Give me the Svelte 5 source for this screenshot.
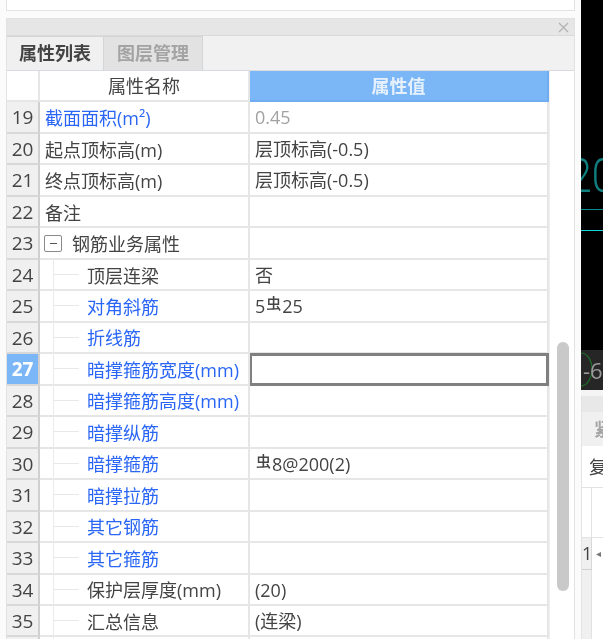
<script>
  // attribute panel rows; kind: blue = editable attr, tree = child of the rebar group
  const rows = [
    { n: 19, name: '截面面积(m²)', value: '0.45', blue: true, muted: true },
    { n: 20, name: '起点顶标高(m)', value: '层顶标高(-0.5)' },
    { n: 21, name: '终点顶标高(m)', value: '层顶标高(-0.5)' },
    { n: 22, name: '备注', value: '' },
    { n: 23, name: '钢筋业务属性', value: '', group: true },
    { n: 24, name: '顶层连梁', value: '否', tree: true },
    { n: 25, name: '对角斜筋', pre: '5', bar: true, value: '25', tree: true, blue: true },
    { n: 26, name: '折线筋', value: '', tree: true, blue: true },
    { n: 27, name: '暗撑箍筋宽度(mm)', value: '', tree: true, blue: true, active: true },
    { n: 28, name: '暗撑箍筋高度(mm)', value: '', tree: true, blue: true },
    { n: 29, name: '暗撑纵筋', value: '', tree: true, blue: true },
    { n: 30, name: '暗撑箍筋', bar: true, value: '8@200(2)', tree: true, blue: true },
    { n: 31, name: '暗撑拉筋', value: '', tree: true, blue: true },
    { n: 32, name: '其它钢筋', value: '', tree: true, blue: true },
    { n: 33, name: '其它箍筋', value: '', tree: true, blue: true },
    { n: 34, name: '保护层厚度(mm)', value: '(20)', tree: true },
    { n: 35, name: '汇总信息', value: '(连梁)', tree: true },
    { n: '', name: '', value: '', tree: true }
  ];
</script>

<div class="app">
  <div class="left">
    <div class="top-strip"></div>
    <section class="panel">
      <header class="title">
        <svg class="close" width="11" height="11" viewBox="0 0 11 11"><path d="M1 1l9 9M10 1l-9 9" stroke="#b4b4b4" stroke-width="1.4" fill="none" /></svg>
      </header>
      <div class="tabs">
        <div class="tab on">属性列表</div>
        <div class="tab">图层管理</div>
      </div>
      <div class="body">
        <div class="table">
          <div class="head corner"></div>
          <div class="head">属性名称</div>
          <div class="head value-head">属性值</div>
          {#each rows as r}
            <div class="num" class:active={r.active}>{r.n}</div>
            <div class="name" class:blue={r.blue}>
              {#if r.group}
                <span class="minus"><i></i></span>
                <span class="group-label">{r.name}</span>
              {:else if r.tree}
                <span class="branch"></span>
                <span class="tree-label">{r.name}</span>
              {:else}
                {r.name}
              {/if}
            </div>
            <div class="val" class:muted={r.muted} class:active={r.active}>
              {#if r.pre}{r.pre}{/if}{#if r.bar}<span class="bar">虫</span>{/if}{r.value}
            </div>
          {/each}
        </div>
        <div class="scroll"><div class="thumb"></div></div>
      </div>
    </section>
  </div>
  <div class="right">
    <div class="canvas">
      <span class="cad-num">20</span>
      <div class="cad-line dim"></div>
      <div class="cad-line bright"></div>
      <div class="cad-foot">
        <svg class="ring" width="22" height="40" viewBox="0 0 22 40"><path d="M0 3C6 3 11 10 11 19S6 36 0 36M11 19" stroke="#1f6b2a" stroke-width="1.2" fill="none" /></svg>
        <span>-6</span>
      </div>
    </div>
    <div class="lower">
      <div class="lower-title"></div>
      <div class="lower-tab">紧</div>
      <div class="lower-row">复</div>
      <div class="lower-grid">
        <div class="lg-corner"></div>
        <div class="lg-head"></div>
        <div class="lg-num">1</div>
        <div class="lg-cell">◂</div>
        <div class="lg-rest"></div>
        <div class="lg-fill"></div>
      </div>
    </div>
  </div>
</div>

<style>
  :global(body) {
    margin: 0;
    background: #f4f4f4;
  }
  .app {
    display: flex;
    width: 603px;
    height: 639px;
    overflow: hidden;
    font-family: "Open Sans", "Noto Sans CJK SC", sans-serif;
    font-size: 18px;
    color: #444;
    filter: blur(0.35px);
  }
  .left {
    width: 581px;
    flex: none;
    padding-left: 6px;
    box-sizing: border-box;
    background: #fbfbfb;
  }
  .top-strip {
    height: 10px;
    margin-right: 6px;
    background: #fff;
    border: 1px solid #e3e3e3;
    border-top: 0;
  }
  .panel {
    margin: 7px 6px 0 0;
    border: 1px solid #e2e2e2;
    border-bottom: 0;
    background: #f1f1f1;
  }
  .title {
    height: 16px;
    background: #e6e6e6;
    border-bottom: 1px solid #dadada;
    display: flex;
    justify-content: flex-end;
    align-items: center;
    padding-right: 5px;
  }
  .tabs {
    display: flex;
    height: 34px;
    border-bottom: 1px solid #d8dce0;
  }
  .tab {
    width: 99px;
    height: 34px;
    line-height: 33px;
    text-align: center;
    font-weight: 700;
    color: #a3a3a3;
    background: #e2e2e2;
    border: 1px solid #d3d6d9;
    border-bottom: 0;
    border-left: 0;
    box-sizing: border-box;
  }
  .tab.on {
    width: 97px;
    color: #444;
    background: #f0f0f0;
  }
  .body {
    display: flex;
    background: #fff;
  }
  .table {
    display: grid;
    grid-template-columns: 33px 210px 299px;
    grid-auto-rows: 31.47px;
    width: 542px;
    flex: none;
  }
  .head {
    background: #fff;
    text-align: center;
    line-height: 30px;
    border-bottom: 2px solid #e6e6e6;
    border-right: 2px solid #e6e6e6;
    box-sizing: border-box;
  }
  .value-head {
    background: #7bb6f6;
    color: #e6f1fd;
    font-weight: 700;
    border-color: #6fadf0;
  }
  .num {
    background: #f0f0f0;
    border-right: 2px solid #d0d0d0;
    border-bottom: 2px solid #d8d8d8;
    text-align: center;
    line-height: 31px;
    font-size: 19px;
    box-sizing: border-box;
  }
  .num.active {
    background: #7bb6f6;
    color: #fff;
    font-weight: 700;
  }
  .name {
    display: flex;
    align-items: center;
    padding-left: 5px;
    border-right: 2px solid #e6e6e6;
    border-bottom: 2px solid #e6e6e6;
    box-sizing: border-box;
    position: relative;
    white-space: nowrap;
  }
  .name.blue {
    color: #2a66f5;
  }
  .minus {
    width: 18px;
    height: 17px;
    margin-left: -1px;
    border: 1px solid #8a8a8a;
    border-radius: 2px;
    box-sizing: border-box;
    display: flex;
    align-items: center;
    justify-content: center;
    flex: none;
  }
  .minus i {
    width: 7px;
    height: 1px;
    background: #555;
  }
  .group-label {
    margin-left: 10px;
  }
  .branch {
    position: absolute;
    left: 13px;
    top: -1px;
    bottom: -2px;
    width: 25px;
    border-left: 1px solid #ebebeb;
  }
  .branch::after {
    content: "";
    position: absolute;
    left: 0;
    top: 15px;
    width: 25px;
    height: 1px;
    background: #e8e8e8;
  }
  .tree-label {
    margin-left: 42px;
  }
  .val {
    padding-left: 5px;
    line-height: 31px;
    border-right: 2px solid #e6e6e6;
    border-bottom: 2px solid #e6e6e6;
    box-sizing: border-box;
    white-space: nowrap;
  }
  .val.muted {
    color: #a2a2a2;
  }
  .val.active {
    border: 3px solid #808080;
    margin: -1px 0 0 -1px;
  }
  .bar {
    font-size: 15px;
    font-weight: 500;
    position: relative;
    top: -4px;
    margin: 0 1px;
  }
  .scroll {
    width: 25px;
    flex: 1;
    background: #fff;
    position: relative;
    border-left: 1px solid #f0f0f0;
  }
  .thumb {
    position: absolute;
    left: 7px;
    top: 271px;
    width: 12px;
    height: 249px;
    border-radius: 6px;
    background: #c9c9c9;
  }
  .close {
    display: block;
  }
  .right {
    flex: 1;
    min-width: 0;
    background: #f4f4f4;
    display: flex;
    flex-direction: column;
  }
  .canvas {
    height: 390px;
    background: #000;
    position: relative;
    overflow: hidden;
    flex: none;
  }
  .cad-num {
    position: absolute;
    left: -12px;
    top: 148px;
    font-family: Roboto, sans-serif;
    font-weight: 300;
    font-size: 48px;
    line-height: 56px;
    color: #0f7f80;
    transform: scaleX(0.85);
    transform-origin: left;
  }
  .cad-line {
    position: absolute;
    left: 0;
    right: 0;
    height: 1px;
  }
  .cad-line.dim {
    top: 209px;
    background: #0b8d90;
  }
  .cad-line.bright {
    top: 230px;
    background: #14d4dc;
  }
  .cad-foot {
    position: absolute;
    left: 0;
    right: 0;
    bottom: 0;
    height: 40px;
    background: #262626;
    color: #9a9a9a;
    font-size: 22px;
    line-height: 40px;
    overflow: hidden;
  }
  .cad-foot span {
    position: relative;
    margin-left: 2px;
  }
  .ring {
    position: absolute;
    left: 0;
    top: 0;
  }
  .lower {
    margin-top: 6px;
    flex: 1;
    background: #fff;
    border-left: 1px solid #e4e4e4;
    overflow: hidden;
    white-space: nowrap;
  }
  .lower-title {
    height: 16px;
    background: #e8e8e8;
  }
  .lower-tab {
    height: 34px;
    line-height: 34px;
    padding-left: 12px;
    background: #f0f0f0;
    color: #a5a5a5;
    font-weight: 700;
  }
  .lower-row {
    height: 41px;
    line-height: 42px;
    padding-left: 7px;
    background: #fff;
  }
  .lower-grid {
    display: grid;
    grid-template-columns: 10px 1fr;
    grid-template-rows: 50px 32px 1fr;
    height: 152px;
    border-top: 1px solid #e2e2e2;
  }
  .lg-corner {
    border-right: 1px solid #e2e2e2;
    border-bottom: 1px solid #e2e2e2;
  }
  .lg-head {
    border-bottom: 1px solid #e2e2e2;
  }
  .lg-num {
    background: #f0f0f0;
    border-right: 1px solid #d8d8d8;
    border-bottom: 1px solid #d0d0d0;
    font-size: 18px;
    line-height: 31px;
    text-align: center;
  }
  .lg-cell {
    font-size: 10px;
    line-height: 31px;
    padding-left: 4px;
    color: #777;
  }
  .lg-rest {
    background: #f0f0f0;
    border-right: 1px solid #e2e2e2;
  }
  .lg-fill {
    background: #fff;
  }
</style>
